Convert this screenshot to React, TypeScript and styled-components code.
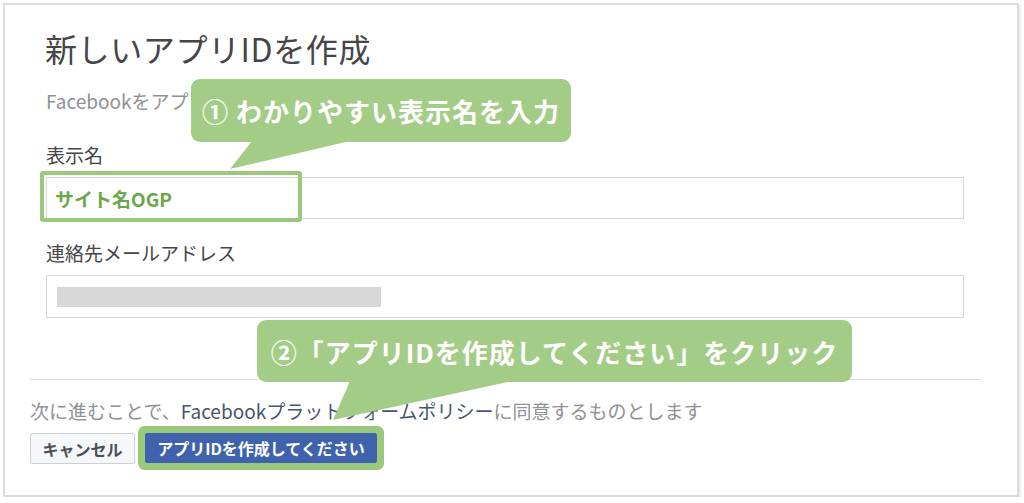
import React from 'react';
import styled, { createGlobalStyle } from 'styled-components';

const GlobalStyle = createGlobalStyle`
  html, body {
    margin: 0;
    padding: 0;
    background: #ffffff;
  }
  body {
    font-family: "Noto Sans CJK JP", "Noto Sans", sans-serif;
    color: #444444;
  }
`;

const GREEN = '#a3cd86';
const GREEN_FRAME = '#9bc97c';

const Frame = styled.div`
  position: relative;
  box-sizing: border-box;
  margin: 3px 0 0 3px;
  width: 1016px;
  height: 494px;
  padding: 21px 37px 0 25px;
  border: 2px solid #dcdcdc;
  box-shadow: 2px 2px 2px rgba(0, 0, 0, 0.08);
  background: #ffffff;
`;

const Body = styled.div`
  display: flex;
  flex-direction: column;
  padding: 0 16px;
`;

const Title = styled.h1`
  margin: 0 0 0 -1px;
  font-size: 32px;
  line-height: 44px;
  font-weight: 400;
  letter-spacing: 0.6px;
  color: #464646;
`;

const Intro = styled.p`
  margin: 19px 0 0;
  font-size: 19px;
  line-height: 24px;
  color: #8f9196;
`;

const Label = styled.label<{ $gap: number }>`
  margin-top: ${(p) => p.$gap}px;
  font-size: 19px;
  line-height: 24px;
  color: #454545;
`;

const Field = styled.div<{ $height: number }>`
  position: relative;
  box-sizing: border-box;
  margin-top: 10px;
  height: ${(p) => p.$height}px;
  border: 1px solid #d6d6d6;
  display: flex;
  align-items: center;
  padding: 0 8px;
`;

const FieldValue = styled.span`
  font-size: 19px;
  font-weight: 700;
  color: #6ba74b;
`;

const MaskedValue = styled.div`
  margin-left: 2px;
  width: 324px;
  height: 20px;
  background: #d8d8d8;
`;

const FieldHighlight = styled.div`
  position: absolute;
  left: -7px;
  top: -7px;
  width: 262px;
  height: 51px;
  box-sizing: border-box;
  border: 4px solid ${GREEN_FRAME};
  border-radius: 3px;
`;

const Divider = styled.hr`
  margin: 61px 0 0;
  border: 0;
  border-top: 1px solid #dddddd;
`;

const Notice = styled.p`
  margin: 19px 0 0;
  font-size: 19px;
  line-height: 24px;
  color: #8f9196;
  white-space: nowrap;
`;

const NoticeLink = styled.span`
  color: #48556f;
`;

const ButtonRow = styled.div`
  display: flex;
  align-items: flex-start;
  gap: 10px;
  margin-top: 10px;
`;

const Button = styled.button<{ $primary?: boolean }>`
  box-sizing: border-box;
  height: ${(p) => (p.$primary ? 30 : 31)}px;
  width: ${(p) => (p.$primary ? 232 : 105)}px;
  padding: 0;
  font-family: inherit;
  font-size: 16px;
  font-weight: 700;
  border-radius: 2px;
  border: 1px solid ${(p) => (p.$primary ? '#3f62ad' : '#cdd0d4')};
  background: ${(p) => (p.$primary ? '#3f62ad' : '#f6f7f9')};
  color: ${(p) => (p.$primary ? '#ffffff' : '#4b4f56')};
  box-shadow: ${(p) => (p.$primary ? `0 0 0 7px ${GREEN_FRAME}` : 'none')};
  cursor: pointer;
`;

const Callout = styled.div<{ $left: number; $top: number; $width: number; $height: number }>`
  position: absolute;
  left: ${(p) => p.$left}px;
  top: ${(p) => p.$top}px;
  width: ${(p) => p.$width}px;
  height: ${(p) => p.$height}px;
  background: ${GREEN};
  border-radius: 9px;
  display: flex;
  align-items: center;
  justify-content: center;
  color: #ffffff;
  font-size: 26px;
  font-weight: 700;
  letter-spacing: 1px;
  white-space: nowrap;
`;

const Tail = styled.svg`
  position: absolute;
  left: 0;
  top: 0;
  overflow: visible;
  pointer-events: none;
`;

function App() {
  return (
    <>
      <GlobalStyle />
      <Frame>
        <Body>
          <Title>新しいアプリIDを作成</Title>
          <Intro>Facebookをアプ</Intro>
          <Label $gap={30}>表示名</Label>
          <Field $height={42}>
            <FieldValue>サイト名OGP</FieldValue>
            <FieldHighlight />
          </Field>
          <Label $gap={22}>連絡先メールアドレス</Label>
          <Field $height={43}>
            <MaskedValue />
          </Field>
        </Body>
        <Divider />
        <Notice>
          次に進むことで、<NoticeLink>Facebookプラットフォームポリシー</NoticeLink>に同意するものとします
        </Notice>
        <ButtonRow>
          <Button>キャンセル</Button>
          <Button $primary>アプリIDを作成してください</Button>
        </ButtonRow>

        <Callout $left={186} $top={74} $width={380} $height={63}>
          <Tail width="1" height="1">
            <polygon points="61,62 159,62 39,90" fill={GREEN} />
          </Tail>
          ① わかりやすい表示名を入力
        </Callout>
        <Callout $left={252} $top={315} $width={595} $height={62}>
          <Tail width="1" height="1">
            <polygon points="93,61 255,61 76,100" fill={GREEN} />
          </Tail>
          ②「アプリIDを作成してください」をクリック
        </Callout>
      </Frame>
    </>
  );
}

export default App;
